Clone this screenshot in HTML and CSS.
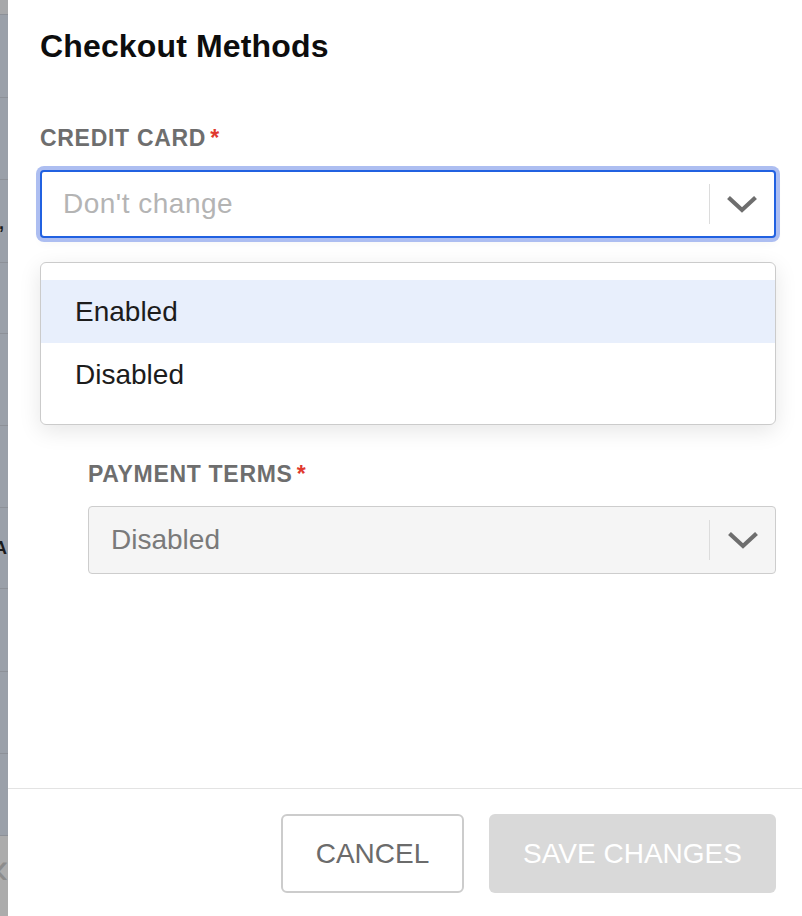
FILE: index.html
```html
<!DOCTYPE html>
<html lang="en">
<head>
<meta charset="utf-8">
<title>Checkout Methods</title>
<link rel="stylesheet" href="styles.css">
</head>
<body>
<div class="page">
  <div class="backdrop">
    <div class="bd-top"></div>
    <div class="bd-row h83"></div>
    <div class="bd-row h82"></div>
    <div class="bd-row h83"><span class="bd-text comma">,</span></div>
    <div class="bd-row h71"></div>
    <div class="bd-row h92"></div>
    <div class="bd-row h82"></div>
    <div class="bd-row h81"><span class="bd-text letter">A</span></div>
    <div class="bd-row h83"></div>
    <div class="bd-row h82"></div>
    <div class="bd-row h82"></div>
    <div class="bd-bottom"><span class="bd-chev">&lsaquo;</span></div>
  </div>

  <div class="modal">
    <div class="modal-body">
      <h2 class="title">Checkout Methods</h2>

      <div class="field">
        <label class="label">CREDIT CARD<span class="req">*</span></label>
        <div class="select-wrap">
          <div class="select is-focused">
            <div class="value placeholder">Don't change</div>
            <span class="sep"></span>
            <span class="indicator">
              <svg width="32" height="18" viewBox="0 0 32 18"><path d="M2.5 2.5 L16 15 L29.5 2.5" fill="none" stroke="#6e6e6e" stroke-width="4.2"/></svg>
            </span>
          </div>
          <div class="menu">
            <div class="option is-active">Enabled</div>
            <div class="option">Disabled</div>
          </div>
        </div>
      </div>

      <div class="field sub">
        <label class="label">PAYMENT TERMS<span class="req">*</span></label>
        <div class="select is-disabled">
          <div class="value">Disabled</div>
          <span class="sep"></span>
          <span class="indicator">
            <svg width="32" height="18" viewBox="0 0 32 18"><path d="M2.5 2.5 L16 15 L29.5 2.5" fill="none" stroke="#6e6e6e" stroke-width="4.2"/></svg>
          </span>
        </div>
      </div>
    </div>

    <div class="modal-footer">
      <button class="btn btn-cancel" type="button">CANCEL</button>
      <button class="btn btn-save" type="button" disabled>SAVE CHANGES</button>
    </div>
  </div>
</div>
</body>
</html>
```

FILE: styles.css
```css
* { box-sizing: border-box; }

html, body {
  margin: 0;
  padding: 0;
  background: #ffffff;
}

body {
  font-family: "Liberation Sans", Arial, sans-serif;
  color: #1a1a1a;
}

.page {
  display: flex;
  width: 802px;
  height: 916px;
  overflow: hidden;
}

/* dimmed page behind the modal */
.backdrop {
  width: 8px;
  flex: none;
  display: flex;
  flex-direction: column;
  background: #9aa0a9;
  overflow: hidden;
}
.bd-top {
  height: 14px;
  background: #a7a8aa;
  flex: none;
}
.bd-row {
  flex: none;
  border-top: 1px solid #8d9198;
  display: flex;
  justify-content: flex-end;
  overflow: hidden;
}
.h71 { height: 71px; }
.h81 { height: 81px; }
.h82 { height: 82px; }
.h83 { height: 83px; }
.h92 { height: 92px; }
.bd-text {
  font-family: "Liberation Sans", Arial, sans-serif;
  font-weight: 700;
  color: #1b1b1b;
  white-space: nowrap;
}
.comma {
  font-size: 18px;
  line-height: 18px;
  margin-top: 34px;
  margin-right: 4px;
}
.letter {
  font-size: 18px;
  line-height: 18px;
  margin-top: 31px;
  margin-right: 1px;
}
.bd-bottom {
  flex: 1;
  background: #acacac;
  border-top: 1px solid #8d9198;
  overflow: hidden;
}
.bd-chev {
  display: block;
  margin-top: 10px;
  margin-left: -6px;
  font-size: 44px;
  line-height: 44px;
  color: #8c8c8c;
}

/* modal */
.modal {
  flex: 1;
  display: flex;
  flex-direction: column;
  background: #ffffff;
}
.modal-body {
  flex: 1;
  padding: 28px 26px 0 32px;
}
.title {
  margin: 0;
  font-size: 32px;
  line-height: 36px;
  font-weight: 700;
  color: #0d0d0d;
  letter-spacing: 0.15px;
}

.field {
  margin-top: 60px;
}
.field.sub {
  margin-top: 222px;
  padding-left: 48px;
}
.label {
  display: block;
  font-size: 23px;
  line-height: 28px;
  font-weight: 700;
  color: #6e6e6e;
  letter-spacing: 0.7px;
  margin-bottom: 18px;
}
.req {
  color: #e03a2f;
  margin-left: 4px;
  letter-spacing: 0;
}

.select-wrap {
  position: relative;
}
.select {
  display: flex;
  align-items: center;
  height: 68px;
  border-radius: 4px;
  background: #ffffff;
}
.select.is-focused {
  border: 2px solid #2161e1;
  box-shadow: 0 0 0 4px #adbef1, 0 6px 10px rgba(0, 0, 0, 0.03);
}
.select.is-disabled {
  border: 1px solid #cdcdcd;
  background: #f5f5f5;
}
.value {
  flex: 1;
  font-size: 28px;
  line-height: 34px;
  padding-left: 21px;
  color: #7a7a7a;
}
.select.is-disabled .value { padding-left: 22px; }
.value.placeholder {
  color: #b4b4b4;
  letter-spacing: 0.5px;
}
.sep {
  width: 1px;
  height: 40px;
  background: #dcdcdc;
  flex: none;
}
.indicator {
  width: 65px;
  flex: none;
  display: flex;
  justify-content: center;
  align-items: center;
}
.select.is-focused .indicator { width: 64px; }
.indicator svg { display: block; }

.menu {
  position: absolute;
  left: 0;
  right: 0;
  top: calc(100% + 24px);
  background: #ffffff;
  border: 1px solid #cbcbcb;
  border-radius: 6px;
  padding: 17px 0 18px;
  box-shadow: 0 6px 22px rgba(0, 0, 0, 0.10);
  z-index: 5;
}
.option {
  height: 63px;
  line-height: 63px;
  padding-left: 34px;
  font-size: 28px;
  color: #1c1c1c;
}
.option.is-active {
  background: #e8effc;
}

/* footer */
.modal-footer {
  flex: none;
  border-top: 1px solid #e3e3e3;
  padding: 25px 26px 23px 0;
  display: flex;
  justify-content: flex-end;
  gap: 25px;
}
.btn {
  height: 79px;
  font-family: "Liberation Sans", Arial, sans-serif;
  font-size: 28px;
  border-radius: 6px;
  cursor: pointer;
}
.btn-cancel {
  width: 183px;
  background: #ffffff;
  border: 2px solid #cccccc;
  color: #6b6b6b;
}
.btn-save {
  width: 287px;
  background: #d9d9d9;
  border: none;
  color: #ffffff;
}
```
